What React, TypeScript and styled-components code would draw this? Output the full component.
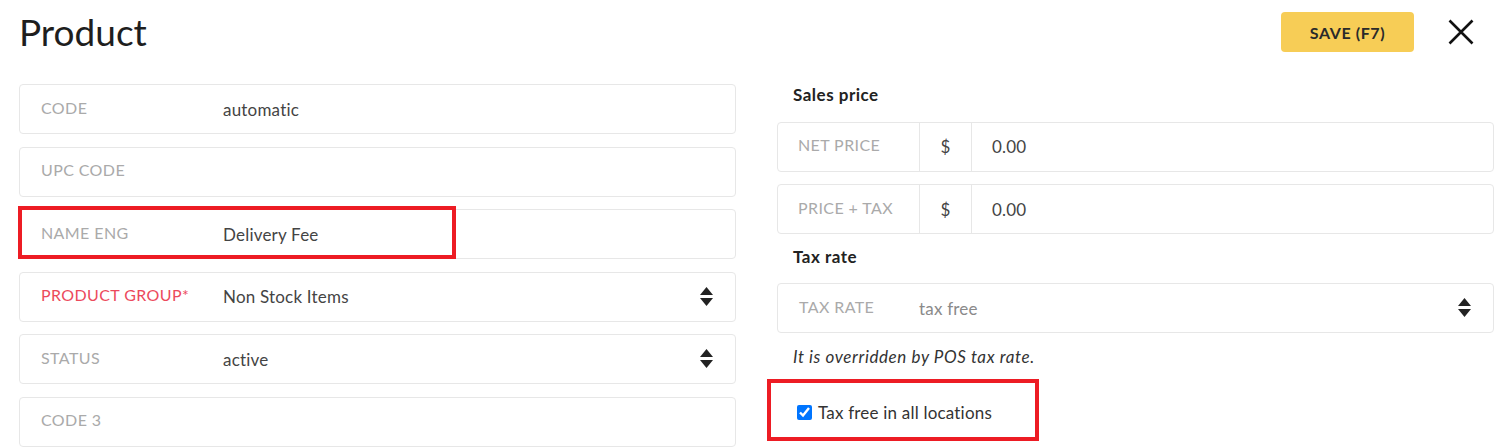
import styled, { createGlobalStyle } from "styled-components";

const GlobalStyle = createGlobalStyle`
  body {
    margin: 0;
    background: #fff;
    font-family: Lato, "Open Sans", sans-serif;
    color: #333;
  }
`;

type Field = {
  label: string;
  value?: string;
  required?: boolean;
  select?: boolean;
  marked?: boolean;
};

const leftFields: Field[] = [
  { label: "CODE", value: "automatic" },
  { label: "UPC CODE" },
  { label: "NAME ENG", value: "Delivery Fee", marked: true },
  { label: "PRODUCT GROUP*", value: "Non Stock Items", required: true, select: true },
  { label: "STATUS", value: "active", select: true },
  { label: "CODE 3" },
];

function SortArrows() {
  return (
    <ArrowIcon width="13" height="20" viewBox="0 0 13 20">
      <path d="M6.5 0 L13 8 L0 8 Z" fill="#222" />
      <path d="M0 11 L13 11 L6.5 19 Z" fill="#222" />
    </ArrowIcon>
  );
}

function CloseIcon() {
  return (
    <svg width="26" height="26" viewBox="0 0 26 26">
      <path d="M1.5 1.5 L24.5 24.5 M24.5 1.5 L1.5 24.5" stroke="#111" strokeWidth="2.6" />
    </svg>
  );
}

export default function App() {
  return (
    <Page>
      <GlobalStyle />
      <Header>
        <Title>Product</Title>
        <Actions>
          <SaveButton>SAVE (F7)</SaveButton>
          <CloseButton>
            <CloseIcon />
          </CloseButton>
        </Actions>
      </Header>
      <Columns>
        <Column>
          {leftFields.map((f) => (
            <FieldRow key={f.label}>
              <Label $required={f.required}>{f.label}</Label>
              <Value>{f.value}</Value>
              {f.select && <SortArrows />}
              {f.marked && <Marker />}
            </FieldRow>
          ))}
        </Column>
        <Column>
          <Heading $after={3}>Sales price</Heading>
          <PriceRow>
            <PriceLabel>NET PRICE</PriceLabel>
            <Currency>$</Currency>
            <PriceValue>0.00</PriceValue>
          </PriceRow>
          <PriceRow>
            <PriceLabel>PRICE + TAX</PriceLabel>
            <Currency>$</Currency>
            <PriceValue>0.00</PriceValue>
          </PriceRow>
          <Heading $after={3} $before={-1}>Tax rate</Heading>
          <FieldRow>
            <TaxLabel>TAX RATE</TaxLabel>
            <Value $muted>tax free</Value>
            <SortArrows />
          </FieldRow>
          <Note>It is overridden by POS tax rate.</Note>
          <CheckRow>
            <input type="checkbox" defaultChecked />
            <span>Tax free in all locations</span>
            <CheckMarker />
          </CheckRow>
        </Column>
      </Columns>
    </Page>
  );
}

const Page = styled.div`
  padding: 12px 13px 0 19px;
  height: 447px;
  box-sizing: border-box;
  overflow: hidden;
`;

const Header = styled.div`
  display: flex;
  justify-content: space-between;
  align-items: flex-start;
`;

const Title = styled.h1`
  margin: 0;
  font-size: 37px;
  font-weight: 400;
  line-height: 40px;
  color: #1e1e1e;
`;

const Actions = styled.div`
  display: flex;
  align-items: center;
  gap: 34px;
  padding-right: 20px;
`;

const SaveButton = styled.button`
  width: 133px;
  height: 40px;
  border: none;
  border-radius: 4px;
  background: #f7cd56;
  color: #2a2a2a;
  font-family: Lato, sans-serif;
  font-size: 16px;
  font-weight: 700;
  letter-spacing: 0.6px;
  cursor: pointer;
`;

const CloseButton = styled.div`
  display: flex;
  width: 26px;
  height: 26px;
`;

const Columns = styled.div`
  display: grid;
  grid-template-columns: 717px 717px;
  column-gap: 41px;
  margin-top: 32px;
`;

const Column = styled.div`
  display: flex;
  flex-direction: column;
  gap: 12.6px;
`;

const FieldRow = styled.div`
  position: relative;
  display: flex;
  align-items: center;
  height: 50px;
  box-sizing: border-box;
  border: 1px solid #e7e7e7;
  border-radius: 4px;
  padding: 0 22px 0 21px;
`;

const Label = styled.span<{ $required?: boolean }>`
  width: 182px;
  flex-shrink: 0;
  padding-bottom: 4px;
  font-size: 16px;
  letter-spacing: 0.4px;
  color: ${(p) => (p.$required ? "#ec4a5c" : "#aaa")};
`;

const TaxLabel = styled(Label)`
  width: 120px;
`;

const Value = styled.span<{ $muted?: boolean }>`
  flex: 1;
  font-size: 17px;
  letter-spacing: 0.2px;
  color: ${(p) => (p.$muted ? "#8a8a8a" : "#444")};
`;

const ArrowIcon = styled.svg`
  flex-shrink: 0;
`;

const Marker = styled.div`
  position: absolute;
  left: -2px;
  top: -4px;
  width: 438px;
  height: 53px;
  box-sizing: border-box;
  border: 4px solid #ed1c24;
  pointer-events: none;
`;

const Heading = styled.div<{ $after: number; $before?: number }>`
  padding-left: 16px;
  margin-top: ${(p) => p.$before ?? 0}px;
  margin-bottom: ${(p) => p.$after}px;
  font-size: 17px;
  font-weight: 700;
  letter-spacing: 0.5px;
  line-height: 22px;
  color: #222;
`;

const PriceRow = styled.div`
  display: grid;
  grid-template-columns: 142px 52px 1fr;
  height: 50px;
  box-sizing: border-box;
  border: 1px solid #e7e7e7;
  border-radius: 4px;
`;

const PriceLabel = styled.div`
  display: flex;
  align-items: center;
  padding-left: 20px;
  padding-bottom: 4px;
  font-size: 16px;
  letter-spacing: 0.4px;
  color: #aaa;
  border-right: 1px solid #e7e7e7;
`;

const Currency = styled.div`
  display: flex;
  align-items: center;
  justify-content: center;
  font-size: 17px;
  color: #444;
  border-right: 1px solid #e7e7e7;
`;

const PriceValue = styled.div`
  display: flex;
  align-items: center;
  padding-left: 20px;
  font-size: 17px;
  letter-spacing: 0.2px;
  color: #444;
`;

const Note = styled.div`
  padding-left: 16px;
  font-size: 17px;
  font-style: italic;
  letter-spacing: 0.6px;
  line-height: 22px;
  color: #333;
`;

const CheckRow = styled.label`
  position: relative;
  display: flex;
  align-items: center;
  gap: 6px;
  margin-top: 21px;
  padding-left: 20px;
  font-size: 17px;
  letter-spacing: 0.2px;
  line-height: 22px;
  color: #333;

  input {
    width: 15px;
    height: 15px;
    margin: 0;
  }
`;

const CheckMarker = styled.div`
  position: absolute;
  left: -10px;
  top: -23px;
  width: 272px;
  height: 62px;
  box-sizing: border-box;
  border: 4px solid #ed1c24;
  pointer-events: none;
`;
